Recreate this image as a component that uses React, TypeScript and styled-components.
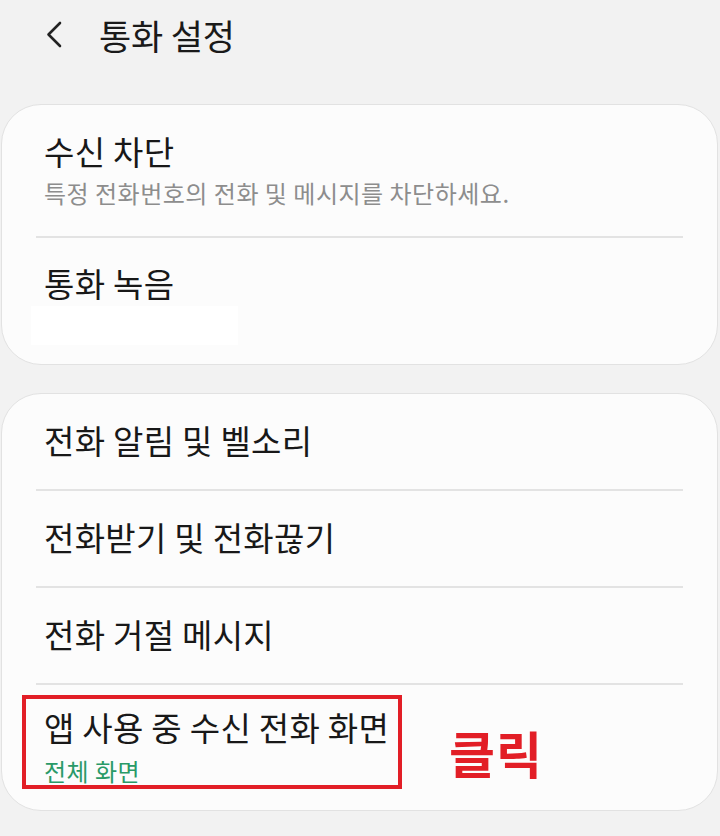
import React from "react";
import styled, { createGlobalStyle } from "styled-components";

const GlobalStyle = createGlobalStyle`
  html, body {
    margin: 0;
    padding: 0;
    background: #f2f2f2;
    font-family: "Noto Sans CJK KR", "Noto Sans", sans-serif;
  }
`;

const Page = styled.div`
  width: 720px;
  height: 836px;
  overflow: hidden;
  display: flex;
  flex-direction: column;
  background: #f2f2f2;
`;

const Header = styled.div`
  box-sizing: border-box;
  display: flex;
  align-items: center;
  height: 74px;
  padding: 0 0 6px 42px;
  gap: 33px;
`;

const Title = styled.div`
  font-size: 35px;
  line-height: 1;
  color: #1a1a1a;
  letter-spacing: -0.2px;
`;

const Card = styled.div<{ top: number }>`
  margin: ${({ top }) => top}px 2px 0 1px;
  background: #fcfcfc;
  border: 1px solid #e2e2e2;
  border-radius: 40px;
  display: flex;
  flex-direction: column;
  padding: 0 34px;
`;

const Row = styled.div<{ pt: number; pb: number }>`
  position: relative;
  display: flex;
  flex-direction: column;
  padding: ${({ pt }) => pt}px 8px ${({ pb }) => pb}px 8px;
`;

const Divider = styled.div`
  height: 2px;
  background: #e3e3e3;
`;

const ItemTitle = styled.div`
  font-size: 33px;
  line-height: 40px;
  color: #181818;
  letter-spacing: 0.3px;
`;

const ItemSub = styled.div<{ green?: boolean; gap: number }>`
  margin-top: ${({ gap }) => gap}px;
  font-size: 24px;
  line-height: 30px;
  letter-spacing: 0.5px;
  color: ${({ green }) => (green ? "#2a9a68" : "#8d8d8d")};
`;

const Redacted = styled.div`
  width: 207px;
  height: 39px;
  margin: 3px 0 0 -13px;
  background: #ffffff;
`;

const Highlight = styled.div`
  position: absolute;
  left: -14px;
  top: 10px;
  width: 372px;
  height: 86px;
  border: 4px solid #e21e26;
`;

const ClickLabel = styled.div`
  position: absolute;
  left: 413px;
  top: 42px;
  font-size: 50px;
  line-height: 1;
  font-weight: 700;
  color: #e21e26;
  letter-spacing: 1px;
`;

function BackIcon(): JSX.Element {
  return (
    <svg width="24" height="30" viewBox="0 0 24 30" fill="none">
      <path
        d="M18 4 L6.5 15.5 L18 27"
        stroke="#222"
        strokeWidth="2.6"
        strokeLinecap="round"
        strokeLinejoin="round"
      />
    </svg>
  );
}

const menu = ["전화 알림 및 벨소리", "전화받기 및 전화끊기", "전화 거절 메시지"];

export default function App(): JSX.Element {
  return (
    <Page>
      <GlobalStyle />
      <Header>
        <BackIcon />
        <Title>통화 설정</Title>
      </Header>
      <Card top={30}>
        <Row pt={26} pb={28}>
          <ItemTitle>수신 차단</ItemTitle>
          <ItemSub gap={7}>특정 전화번호의 전화 및 메시지를 차단하세요.</ItemSub>
        </Row>
        <Divider />
        <Row pt={25} pb={19}>
          <ItemTitle>통화 녹음</ItemTitle>
          <Redacted />
        </Row>
      </Card>
      <Card top={28}>
        {menu.map((m) => (
          <React.Fragment key={m}>
            <Row pt={26} pb={29}>
              <ItemTitle>{m}</ItemTitle>
            </Row>
            <Divider />
          </React.Fragment>
        ))}
        <Row pt={22} pb={24}>
          <ItemTitle>앱 사용 중 수신 전화 화면</ItemTitle>
          <ItemSub green gap={9}>
            전체 화면
          </ItemSub>
          <Highlight />
          <ClickLabel>클릭</ClickLabel>
        </Row>
      </Card>
    </Page>
  );
}
